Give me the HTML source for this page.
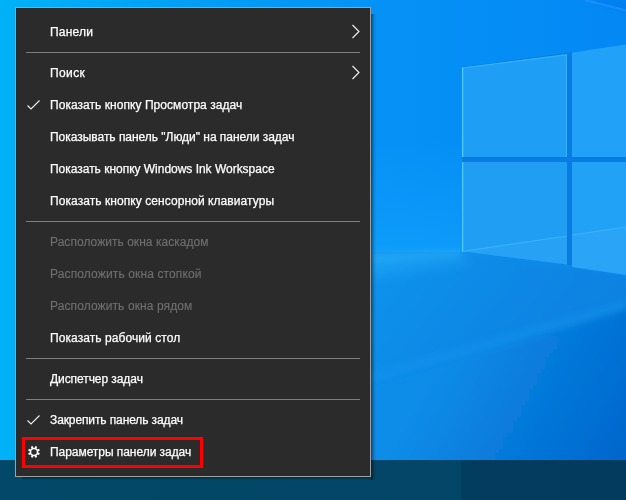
<!DOCTYPE html>
<html><head><meta charset="utf-8">
<style>
html,body{margin:0;padding:0;width:626px;height:500px;overflow:hidden;}
body{position:relative;background:#0a84e0;font-family:"Liberation Sans",sans-serif;}
#bg{position:absolute;left:0;top:0;width:626px;height:460px;}
#taskbar{position:absolute;left:0;top:460px;width:626px;height:40px;background:linear-gradient(90deg,#034868 0,#034667 461px,#023c5f 461px,#023b5d 626px);}
#menu{will-change:transform;position:absolute;left:15px;top:7px;width:354px;height:468px;border:1px solid #a0a0a0;background:#2b2b2b;}
#shadow{position:absolute;left:371px;top:14px;width:5px;height:466px;background:linear-gradient(90deg,rgba(0,0,0,0.5),rgba(0,0,0,0.2) 45%,rgba(0,0,0,0));}
#shadow2{position:absolute;left:22px;top:477px;width:349px;height:3px;background:linear-gradient(180deg,rgba(0,0,0,0.4),rgba(0,0,0,0));}
.it{-webkit-text-stroke:0.25px currentColor;position:absolute;left:34px;font-size:12px;color:#fff;white-space:nowrap;line-height:32px;height:32px;}
.dis{color:#707070;-webkit-text-stroke:0.1px #707070;}
.sep{position:absolute;left:10px;width:334px;height:1px;background:#7f7f7f;}
#red{position:absolute;left:22px;top:437px;width:175px;height:25px;border:3px solid #ff0000;}
svg{position:absolute;left:0;top:0;}
</style></head><body>
<svg id="bg" width="626" height="460" viewBox="0 0 626 460">
  <defs>
    <linearGradient id="gh" x1="0" y1="0" x2="626" y2="0" gradientUnits="userSpaceOnUse">
      <stop offset="0" stop-color="#00b2f8"/>
      <stop offset="0.3" stop-color="#029ff4"/>
      <stop offset="0.6" stop-color="#0592f6"/>
      <stop offset="1" stop-color="#0488f4"/>
    </linearGradient>
    <linearGradient id="gf" x1="370" y1="250" x2="626" y2="460" gradientUnits="userSpaceOnUse">
      <stop offset="0" stop-color="#0894ec"/>
      <stop offset="0.45" stop-color="#0886e4"/>
      <stop offset="1" stop-color="#067cdc"/>
    </linearGradient>
    <linearGradient id="gd" x1="440" y1="360" x2="626" y2="460" gradientUnits="userSpaceOnUse">
      <stop offset="0" stop-color="#088ce8"/>
      <stop offset="1" stop-color="#0566cc"/>
    </linearGradient>
    <filter id="b6" x="-20%" y="-20%" width="140%" height="140%"><feGaussianBlur stdDeviation="6"/></filter>
    <filter id="b3" x="-20%" y="-20%" width="140%" height="140%"><feGaussianBlur stdDeviation="3"/></filter>
    <filter id="b1" x="-20%" y="-20%" width="140%" height="140%"><feGaussianBlur stdDeviation="0.6"/></filter>
    <clipPath id="cl"><rect width="626" height="460"/></clipPath>
  </defs>
  <rect width="626" height="460" fill="url(#gh)"/>
  <g clip-path="url(#cl)">
  <polygon points="330,252 462,251 566,264 626,275 700,290 700,520 330,520" fill="url(#gf)" filter="url(#b3)"/>
  <polygon points="330,400 626,310 700,290 700,520 330,520" fill="url(#gd)" filter="url(#b3)"/><polygon points="370,386 626,308 626,300 370,372" fill="#1898f0" opacity="0.35" filter="url(#b3)"/>
  <linearGradient id="gl" x1="0" y1="140" x2="0" y2="252" gradientUnits="userSpaceOnUse"><stop offset="0" stop-color="#18a8ff" stop-opacity="0"/><stop offset="1" stop-color="#18a8ff" stop-opacity="0.45"/></linearGradient>
  <rect x="370" y="140" width="92" height="112" fill="url(#gl)"/>
  <polygon points="370,254 462,251 470,262 370,278" fill="#30b8ff" opacity="0.3" filter="url(#b6)"/><polygon points="370,254 462,251 462,256 370,262" fill="#40c0ff" opacity="0.3" filter="url(#b3)"/>
  <polygon points="585,0 640,14 640,2 600,-2" fill="#0676ee" opacity="0.6" filter="url(#b3)"/><line x1="585" y1="0" x2="640" y2="14" stroke="#40a8ff" stroke-width="2" opacity="0.35" filter="url(#b1)"/>
  </g>
  <polygon points="462,67 626,45 626,275 567,264.5 462,251.5" fill="#097ce4"/>
  <polygon points="462,67.5 567,54.2 567,157 462,157" fill="#1f9ef6"/>
  <polygon points="572,52.5 626,44.5 626,157 572,157" fill="#21a2f8"/>
  <polygon points="462,162 567,162 567,264.5 462,251.5" fill="#1f9ef4"/>
  <polygon points="572,162 626,162 626,275 572,267" fill="#21a2f6"/>
  <polygon points="462,251.5 567,236 567,264.5" fill="#3aaaf6" opacity="0.3"/><polygon points="572,235 626,227 626,275 572,267" fill="#3aaaf6" opacity="0.3"/>
  <g stroke="#5cd0ff" fill="none">
    <polyline points="462.6,157 462.6,67.5" stroke-width="1.3" opacity="0.85"/>
    <polyline points="462.6,251.5 462.6,162" stroke-width="1.3" opacity="0.85"/>
    <polyline points="462,68 567,54.7" stroke-width="1.2" opacity="0.45"/>
    <polyline points="566.5,55 566.5,157" stroke-width="1" opacity="0.35"/>
    <polyline points="462,251.5 567,236" stroke-width="1.2" opacity="0.4"/><polyline points="572,235 626,227" stroke-width="1.2" opacity="0.4"/>
  </g>
</svg>
<div id="taskbar"></div>
<div id="shadow"></div><div id="shadow2"></div>
<div id="menu">
  <div class="it" style="letter-spacing:0.2px;top:8px">Панели</div>
  <div class="sep" style="top:44px"></div>
  <div class="it" style="letter-spacing:0.4px;top:49px">Поиск</div>
  <div class="it" style="letter-spacing:0.05px;top:81px">Показать кнопку Просмотра задач</div>
  <div class="it" style="letter-spacing:-0.03px;top:113px">Показывать панель "Люди" на панели задач</div>
  <div class="it" style="letter-spacing:-0.02px;top:145px">Показать кнопку Windows Ink Workspace</div>
  <div class="it" style="letter-spacing:0.07px;top:177px">Показать кнопку сенсорной клавиатуры</div>
  <div class="sep" style="top:213px"></div>
  <div class="it dis" style="letter-spacing:0.04px;top:218px">Расположить окна каскадом</div>
  <div class="it dis" style="letter-spacing:0.13px;top:250px">Расположить окна стопкой</div>
  <div class="it dis" style="letter-spacing:0.1px;top:282px">Расположить окна рядом</div>
  <div class="it" style="letter-spacing:0.07px;top:314px">Показать рабочий стол</div>
  <div class="sep" style="top:350px"></div>
  <div class="it" style="letter-spacing:-0.07px;top:355px">Диспетчер задач</div>
  <div class="sep" style="top:391px"></div>
  <div class="it" style="letter-spacing:-0.11px;top:396px">Закрепить панель задач</div>
  <div class="it" style="letter-spacing:-0.05px;top:428px">Параметры панели задач</div>
</div>
<svg width="626" height="500" viewBox="0 0 626 500" style="pointer-events:none">
  <g fill="none" stroke="#f2f2f2" stroke-width="1.1">
    <polyline points="27.5,105.5 31,109 39.5,100.5"/>
    <polyline points="27.5,420.5 31,424 39.5,415.5"/>
    <polyline points="352.5,25 359,31.5 352.5,38"/>
    <polyline points="352.5,66 359,72.5 352.5,79"/>
  </g>
<path fill="#ffffff" fill-rule="evenodd" d="M34.68,447.65 L35.34,446.05 L37.19,446.82 L36.52,448.42 L37.48,449.38 L39.08,448.71 L39.85,450.56 L38.25,451.22 L38.25,452.58 L39.85,453.24 L39.08,455.09 L37.48,454.42 L36.52,455.38 L37.19,456.98 L35.34,457.75 L34.68,456.15 L33.32,456.15 L32.66,457.75 L30.81,456.98 L31.48,455.38 L30.52,454.42 L28.92,455.09 L28.15,453.24 L29.75,452.58 L29.75,451.22 L28.15,450.56 L28.92,448.71 L30.52,449.38 L31.48,448.42 L30.81,446.82 L32.66,446.05 L33.32,447.65 Z M36.75,451.9 A2.75,2.75 0 1,0 31.25,451.9 A2.75,2.75 0 1,0 36.75,451.9 Z"/>
</svg>
<div id="red"></div>
</body></html>
